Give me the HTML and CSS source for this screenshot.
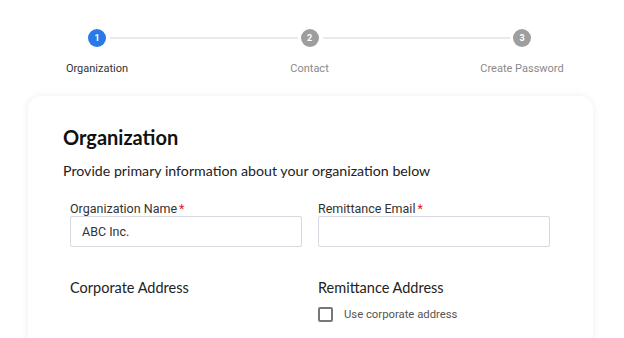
FILE: index.html
```html
<!DOCTYPE html>
<html lang="en">
<head>
    <meta charset="UTF-8">
    <meta name="viewport" content="width=device-width, initial-scale=1.0">
    <title>Sign Up - Organization</title>
    <link rel="stylesheet" href="styles.css">
</head>
<body>
    <!-- Stepper -->
    <div class="stepper">
        <div class="step active">
            <div class="step-dot">1</div>
            <div class="step-label">Organization</div>
        </div>
        <div class="step-line"></div>
        <div class="step">
            <div class="step-dot">2</div>
            <div class="step-label">Contact</div>
        </div>
        <div class="step-line"></div>
        <div class="step">
            <div class="step-dot">3</div>
            <div class="step-label">Create Password</div>
        </div>
    </div>

    <!-- Organization card -->
    <div class="card">
        <h1>Organization</h1>
        <p class="subtitle">Provide primary information about your organization below</p>

        <div class="form-grid">
            <div class="field">
                <label class="field-label">Organization Name<span class="req">*</span></label>
                <input class="text-input" type="text" value="ABC Inc.">
            </div>
            <div class="field">
                <label class="field-label">Remittance Email<span class="req">*</span></label>
                <input class="text-input" type="email">
            </div>

            <div class="section">
                <div class="section-title">Corporate Address</div>
            </div>
            <div class="section">
                <div class="section-title">Remittance Address</div>
                <label class="check">
                    <span class="check-box"></span>
                    Use corporate address
                </label>
            </div>
        </div>
    </div>
</body>
</html>
```

FILE: styles.css
```css
body {
    margin: 0;
    background: #fff;
    font-family: Roboto, "Liberation Sans", sans-serif;
    color: #333;
    overflow: hidden;
}
.stepper {
    display: flex;
    align-items: flex-start;
    padding: 29px 93px 0 88px;
    height: 96px;
    box-sizing: border-box;
}
.step {
    width: 18px;
    flex: none;
    display: flex;
    flex-direction: column;
    align-items: center;
}
.step-dot {
    width: 18px;
    height: 18px;
    border-radius: 50%;
    background: #9e9e9e;
    color: #fff;
    font-size: 9px;
    font-weight: 700;
    line-height: 18px;
    text-align: center;
}
.step.active .step-dot {
    background: #2979e8;
}
.step-label {
    margin-top: 15px;
    white-space: nowrap;
    font-size: 11px;
    line-height: 13px;
    color: #8a8a8a;
}
.step.active .step-label {
    color: #333;
}
.step-line {
    flex: 1;
    height: 2px;
    margin: 8px 3px 0 4px;
    background: #e9e9ef;
}
.card {
    margin: 0 31px 0 28px;
    padding: 29px 35px 0;
    height: 260px;
    background: #fff;
    border-radius: 14px;
    box-shadow: 0 0 8px rgba(0, 0, 0, 0.07);
}
h1 {
    margin: 0;
    font-family: Lato, "Noto Sans", sans-serif;
    font-size: 20px;
    font-weight: 700;
    line-height: 24px;
    color: #111;
}
.subtitle {
    margin: 13px 0 0;
    font-family: Lato, "Noto Sans", sans-serif;
    font-size: 14.2px;
    line-height: 18px;
    color: #222;
}
.form-grid {
    display: grid;
    grid-template-columns: 232px 232px;
    column-gap: 16px;
    margin: 22px 0 0 7px;
}
.field {
    display: flex;
    flex-direction: column;
}
.field-label {
    font-size: 12.5px;
    line-height: 14px;
    color: #333;
}
.req {
    color: #e0202a;
    margin-left: 2px;
}
.text-input {
    box-sizing: border-box;
    width: 232px;
    height: 31px;
    margin: 0;
    padding: 0 11px;
    border: 1px solid #d6d9df;
    border-radius: 2px;
    font-family: Roboto, "Liberation Sans", sans-serif;
    font-size: 12.5px;
    color: #333;
    outline: none;
}
.section {
    margin-top: 33px;
}
.section-title {
    font-family: Lato, "Noto Sans", sans-serif;
    font-size: 14.5px;
    line-height: 16px;
    color: #222;
}
.check {
    display: flex;
    align-items: center;
    margin-top: 11px;
    font-size: 11.3px;
    color: #555;
}
.check-box {
    box-sizing: border-box;
    width: 15px;
    height: 15px;
    border: 2px solid #777;
    border-radius: 2px;
    margin-right: 11px;
}
```
